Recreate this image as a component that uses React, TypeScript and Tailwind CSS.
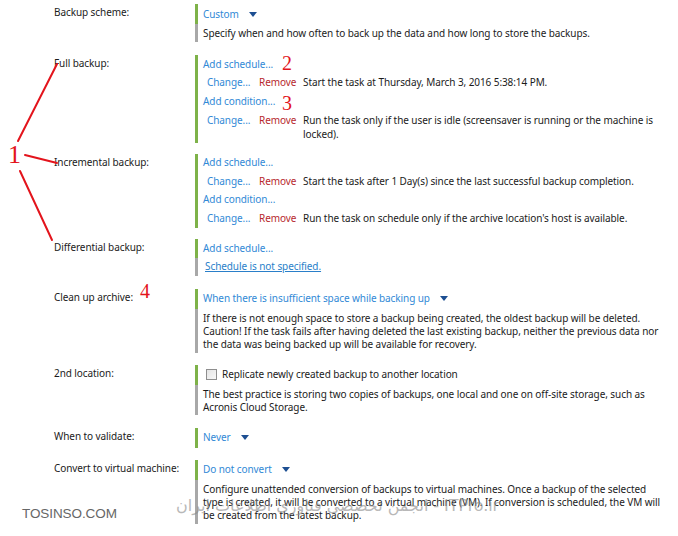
import type { ReactNode } from 'react';

// Backup options panel with red tutorial annotations over it

function Caret() {
  return (
    <svg width="8" height="5" viewBox="0 0 8 5" className="shrink-0">
      <path d="M0 0h8L4 5z" fill="#1d4f92" />
    </svg>
  );
}

function Dropdown({ value }: { value: string }) {
  return (
    <div className="flex h-[20px] items-center gap-[10px]">
      <span className="text-[#3189d6]">{value}</span>
      <Caret />
    </div>
  );
}

function Section({ label, mb, children }: { label: string; mb: string; children: ReactNode }) {
  return (
    <div className={`flex ${mb}`}>
      <div className="mt-[1px] w-[141px] shrink-0 leading-[14px] text-[#1b1b1b]">{label}</div>
      <div className="flex-1">{children}</div>
    </div>
  );
}

function Green({ children }: { children: ReactNode }) {
  return <div className="border-l-[3px] border-[#7eb249] pl-[5px]">{children}</div>;
}

function Gray({ children }: { children: ReactNode }) {
  return <div className="border-l-[3px] border-[#a8a8a8] pl-[5px]">{children}</div>;
}

function LinkRow({ text }: { text: string }) {
  return <div className="flex h-[18.5px] items-center text-[#3189d6]">{text}</div>;
}

function ChangeRow({ text, wrap }: { text: ReactNode; wrap?: boolean }) {
  return (
    <div className={`flex pl-[4px] ${wrap ? 'py-[2px] leading-[14px]' : 'h-[18.5px] items-center'}`}>
      <span className="w-[52px] shrink-0 text-[#3189d6]">Change...</span>
      <span className="w-[44px] shrink-0 text-[#b7282e]">Remove</span>
      <span className="text-[#1b1b1b]">{text}</span>
    </div>
  );
}

function Desc({ children, className }: { children: ReactNode; className: string }) {
  return <div className={`leading-[13px] text-[#1b1b1b] ${className}`}>{children}</div>;
}

export default function App() {
  return (
    <div className="relative h-[536px] w-[678px] overflow-hidden bg-white pl-[54px] pt-[4px] font-['Noto_Sans',sans-serif] text-[10px] tracking-[-0.08px]">
      <Section label="Backup scheme:" mb="mb-[13px]">
        <Green>
          <Dropdown value="Custom" />
        </Green>
        <Gray>
          <Desc className="flex h-[18px] items-center">
            Specify when and how often to back up the data and how long to store the backups.
          </Desc>
        </Gray>
      </Section>

      <Section label="Full backup:" mb="mb-[11px]">
        <Green>
          <LinkRow text="Add schedule..." />
          <ChangeRow text="Start the task at Thursday, March 3, 2016 5:38:14 PM." />
          <LinkRow text="Add condition..." />
          <ChangeRow
            wrap
            text={
              <>
                Run the task only if the user is idle (screensaver is running or the machine is
                <br />
                locked).
              </>
            }
          />
        </Green>
      </Section>

      <Section label="Incremental backup:" mb="mb-[11px]">
        <Green>
          <LinkRow text="Add schedule..." />
          <ChangeRow text="Start the task after 1 Day(s) since the last successful backup completion." />
          <LinkRow text="Add condition..." />
          <ChangeRow text="Run the task on schedule only if the archive location's host is available." />
        </Green>
      </Section>

      <Section label="Differential backup:" mb="mb-[13px]">
        <Green>
          <div className="flex h-[19px] items-center text-[#3189d6]">Add schedule...</div>
        </Green>
        <Gray>
          <div className="flex h-[18px] items-center pl-[2px] text-[#2a7fc9] underline">Schedule is not specified.</div>
        </Gray>
      </Section>

      <Section label="Clean up archive:" mb="mb-[12px]">
        <Green>
          <Dropdown value="When there is insufficient space while backing up" />
        </Green>
        <Gray>
          <Desc className="pb-[2px] pt-[3px]">
            If there is not enough space to store a backup being created, the oldest backup will be deleted.
            <br />
            Caution! If the task fails after having deleted the last existing backup, neither the previous data nor
            <br />
            the data was being backed up will be available for recovery.
          </Desc>
        </Gray>
      </Section>

      <Section label="2nd location:" mb="mb-[13px]">
        <Green>
          <div className="flex h-[20px] items-center gap-[5px] pl-[3px]">
            <span className="h-[11px] w-[11px] border border-[#8e8e8e] bg-gradient-to-br from-[#e4e4e4] to-[#f8f8f8]" />
            <span className="text-[#1b1b1b]">Replicate newly created backup to another location</span>
          </div>
        </Green>
        <Gray>
          <Desc className="pb-[1px] pt-[3px]">
            The best practice is storing two copies of backups, one local and one on off-site storage, such as
            <br />
            Acronis Cloud Storage.
          </Desc>
        </Gray>
      </Section>

      <Section label="When to validate:" mb="mb-[12px]">
        <Green>
          <Dropdown value="Never" />
        </Green>
      </Section>

      <Section label="Convert to virtual machine:" mb="mb-0">
        <Green>
          <Dropdown value="Do not convert" />
        </Green>
        <Gray>
          <Desc className="pb-[2px] pt-[3px]">
            Configure unattended conversion of backups to virtual machines. Once a backup of the selected
            <br />
            type is created, it will be converted to a virtual machine (VM). If conversion is scheduled, the VM will
            <br />
            be created from the latest backup.
          </Desc>
        </Gray>
      </Section>

      {/* red annotations */}
      <svg className="pointer-events-none absolute left-0 top-0" width="678" height="536">
        <g stroke="#e3141c" strokeWidth="2" strokeLinecap="round">
          <line x1="18" y1="141" x2="57" y2="64" />
          <line x1="25" y1="155" x2="57" y2="163" />
          <line x1="20" y1="171" x2="52" y2="240" />
        </g>
      </svg>
      <span className="absolute left-[8px] top-[142px] font-['Liberation_Serif',serif] text-[26px] leading-none text-[#e3141c]">1</span>
      <span className="absolute left-[282px] top-[53px] font-['Liberation_Serif',serif] text-[20px] leading-none text-[#e3141c]">2</span>
      <span className="absolute left-[282px] top-[93px] font-['Liberation_Serif',serif] text-[20px] leading-none text-[#e3141c]">3</span>
      <span className="absolute left-[140px] top-[281px] font-['Liberation_Serif',serif] text-[20px] leading-none text-[#e3141c]">4</span>

      {/* watermarks */}
      <span className="absolute left-[22px] top-[507px] font-['Liberation_Sans',sans-serif] text-[13.5px] font-light leading-none text-[#666]">
        TOSINSO.COM
      </span>
      <span
        dir="rtl"
        className="absolute left-[176px] top-[498px] font-['DejaVu_Sans',sans-serif] text-[16px] leading-none text-[#8a8a8a] opacity-60"
      >
        ITPro.ir - انجمن تخصصی فناوری اطلاعات ایران
      </span>
    </div>
  );
}
